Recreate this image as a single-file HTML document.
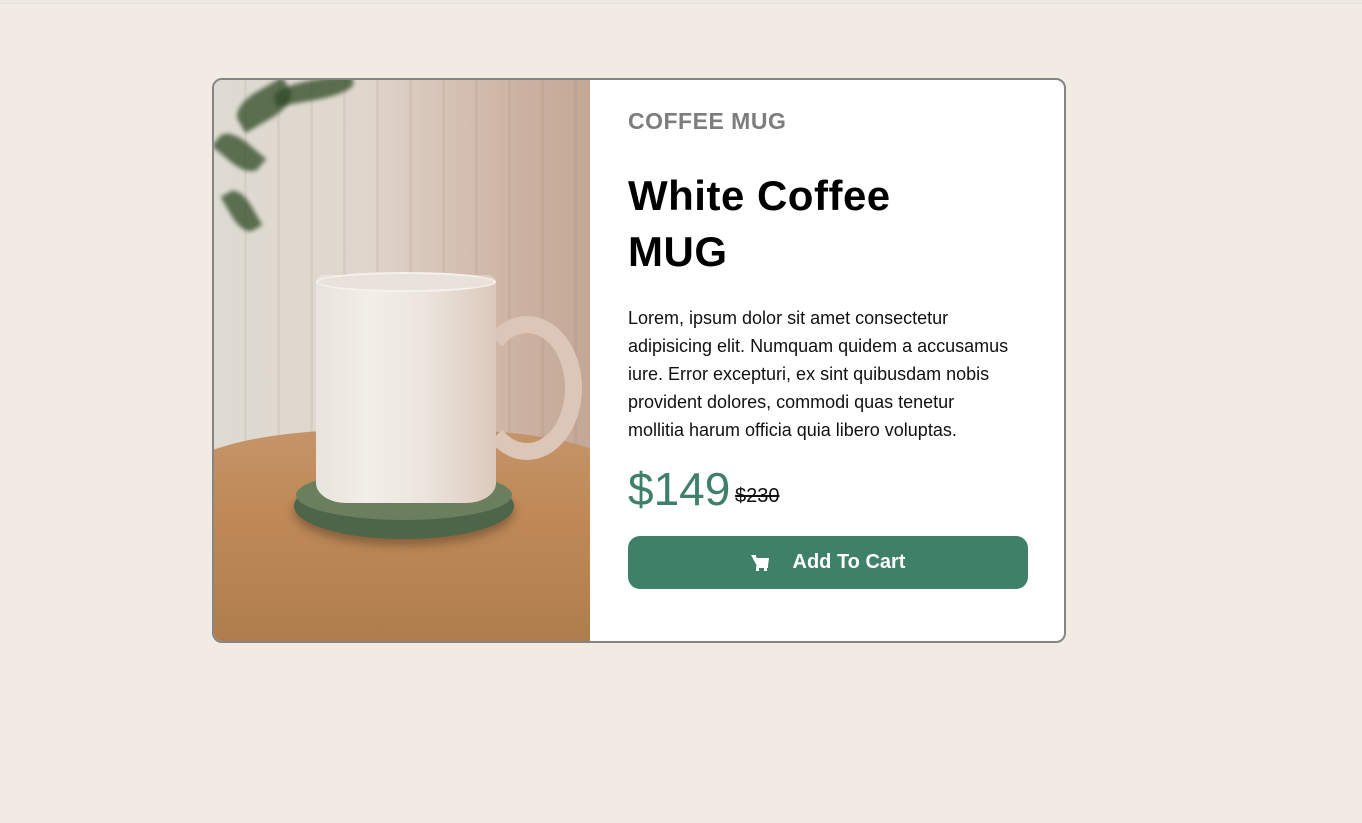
<!DOCTYPE html>
<html><head><meta charset="utf-8"><style>
*{margin:0;padding:0;box-sizing:border-box}
html,body{width:1362px;height:823px;background:#f2ebe4;overflow:hidden;font-family:"Comic Sans MS","Liberation Sans",sans-serif}
.top{height:4px;background:#ede8e2;border-bottom:1px solid #e6e0da}
.card{position:absolute;left:212px;top:78px;width:854px;height:565px;border:2px solid #858585;border-radius:10px;background:#fff;overflow:hidden}
.img{position:absolute;left:0;top:0;width:376px;height:561px;overflow:hidden;
background:linear-gradient(90deg,#dedbd3 0%,#e0d6cc 40%,#cdb3a3 80%,#c3a797 100%)}
.wall{position:absolute;inset:0;background:repeating-linear-gradient(90deg,rgba(0,0,0,0) 0 30px,rgba(120,90,70,.08) 30px 33px)}
.table{position:absolute;left:-40px;top:350px;width:460px;height:260px;background:linear-gradient(180deg,#c49469 0%,#c08a58 30%,#b3804f 70%,#a8784a 100%);border-radius:40% 40% 0 0/20% 20% 0 0}
.coaster{position:absolute;left:80px;top:393px;width:220px;height:66px;border-radius:50%;background:#4d6548;box-shadow:0 6px 10px rgba(0,0,0,.3)}
.coaster2{position:absolute;left:82px;top:390px;width:216px;height:50px;border-radius:50%;background:#6a7f5e}
.mug{position:absolute;left:102px;top:195px;width:180px;height:228px;background:linear-gradient(90deg,#e8e3dc 0%,#f2eee8 30%,#ece5dd 60%,#dcc9bc 100%);border-radius:8px 8px 30px 30px/8px 8px 20px 20px}
.rim{position:absolute;left:102px;top:192px;width:180px;height:20px;border-radius:50%;background:#e9e2da;border:2px solid #f5f1ec}
.handle{position:absolute;left:258px;top:236px;width:110px;height:144px;border:17px solid #dcc6b8;border-radius:50%;border-left-color:transparent}
.leaf{position:absolute;background:#2e4a25;border-radius:50% 0;opacity:.75;filter:blur(2px)}
.cat{position:absolute;left:414px;top:28px;font-size:23px;font-weight:bold;color:#7d7d7d;letter-spacing:.5px}
h1{position:absolute;left:414px;top:88px;font-size:42px;line-height:56px;font-weight:bold;color:#000;letter-spacing:.5px}
p{position:absolute;left:414px;top:224px;font-size:18px;line-height:28px;color:#111;white-space:nowrap}
.price{position:absolute;left:414px;top:382px;font-size:46px;color:#3e8068}
.old{position:absolute;left:521px;top:405px;font-size:20px;text-decoration:line-through;color:#111}
.btn{position:absolute;left:414px;top:456px;width:400px;height:53px;background:#3e8068;border-radius:12px;color:#fff;font-size:20px;font-weight:bold;display:flex;align-items:center;justify-content:center}
.btn svg{margin-right:24px}
</style></head><body>
<div class="top"></div>
<div class="card">
 <div class="img">
  <div class="wall"></div>
  <div class="leaf" style="left:20px;top:10px;width:60px;height:30px;transform:rotate(-30deg)"></div>
  <div class="leaf" style="left:0;top:60px;width:50px;height:25px;transform:rotate(40deg)"></div>
  <div class="leaf" style="left:60px;top:0;width:80px;height:20px;transform:rotate(-10deg)"></div>
  <div class="leaf" style="left:5px;top:120px;width:45px;height:22px;transform:rotate(60deg)"></div>
  <div class="table"></div>
  <div class="coaster"></div><div class="coaster2"></div>
  <div class="handle"></div>
  <div class="mug"></div><div class="rim"></div>
 </div>
 <div class="cat">COFFEE MUG</div>
 <h1>White Coffee<br>MUG</h1>
 <p>Lorem, ipsum dolor sit amet consectetur<br>adipisicing elit. Numquam quidem a accusamus<br>iure. Error excepturi, ex sint quibusdam nobis<br>provident dolores, commodi quas tenetur<br>mollitia harum officia quia libero voluptas.</p>
 <div class="price">$149</div>
 <div class="old">$230</div>
 <div class="btn"><svg width="18" height="18" viewBox="0 0 18 18"><path d="M0 1h4l2 3h12l-1 8H6zM2 1h3v3H2z" fill="#fff"/><rect x="5" y="14" width="3" height="3" fill="#fff"/><rect x="13" y="14" width="3" height="3" fill="#fff"/><rect x="5" y="12" width="12" height="2" fill="#fff"/></svg>Add To Cart</div>
</div>
</body></html>
